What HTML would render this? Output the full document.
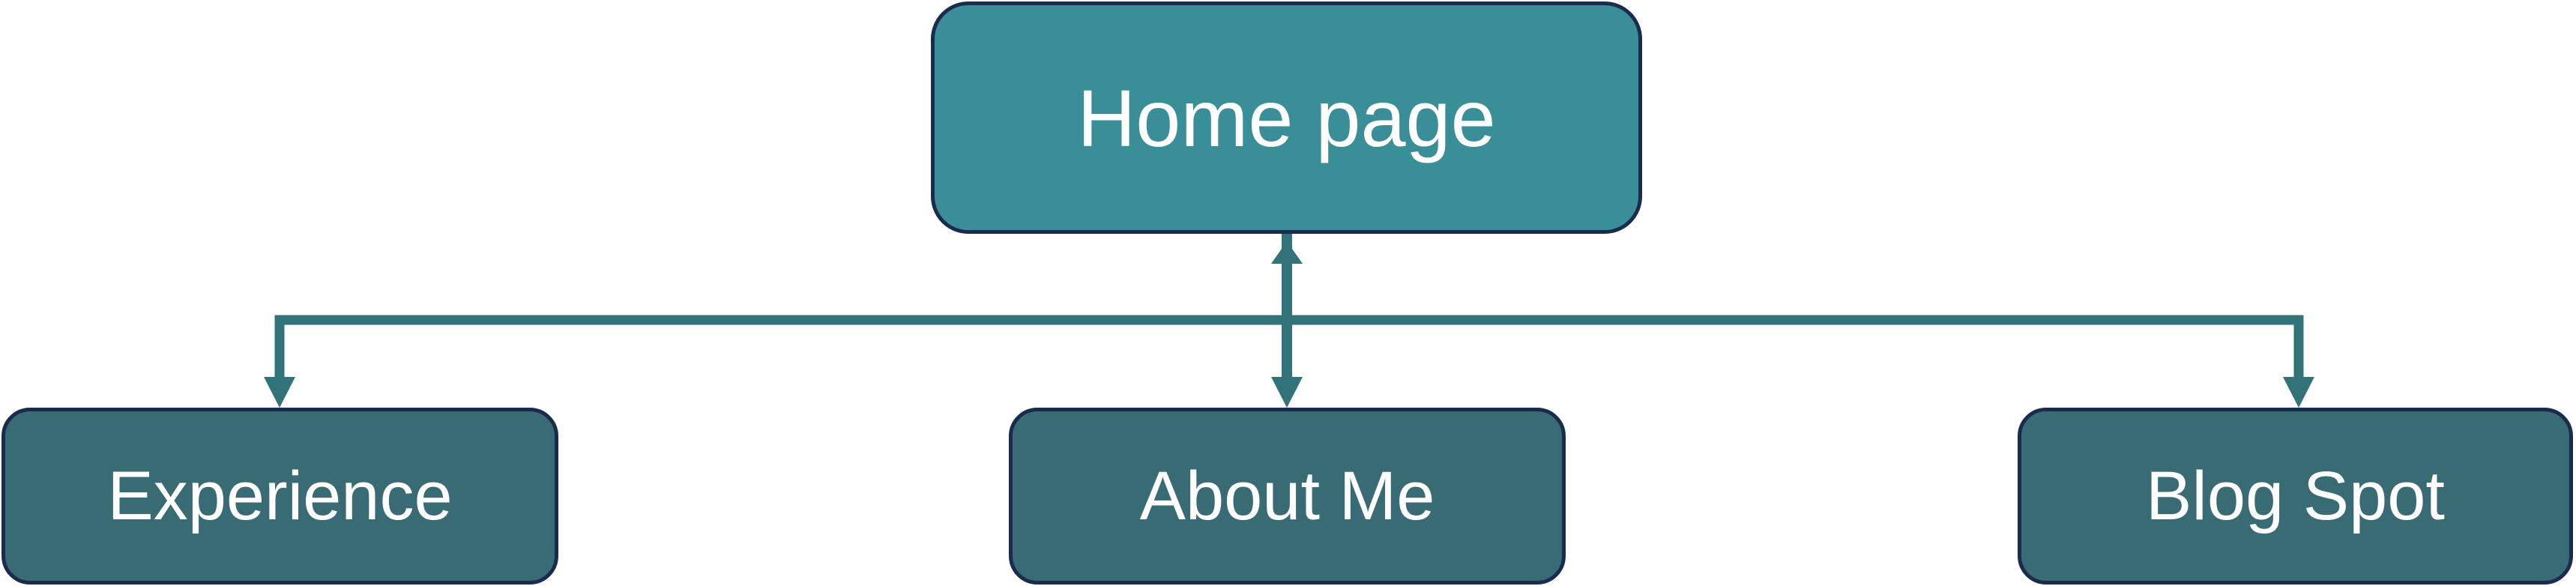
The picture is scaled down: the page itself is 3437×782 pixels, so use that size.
<!DOCTYPE html>
<html><head><style>
html,body{margin:0;padding:0;background:#fff;width:3437px;height:782px;overflow:hidden;position:relative}
.b{position:absolute;box-sizing:border-box;border:5px solid #1B2B4E;display:flex;align-items:center;justify-content:center;color:#fff;font-family:"Liberation Sans",sans-serif}
.h{background:#3A8E98;border-radius:50px;font-size:108px}
.c{background:#386B74;border-radius:38px;font-size:92px}
</style></head><body>
<svg width="3437" height="782" style="position:absolute;left:0;top:0">
<g fill="#32737A">
<polyline points="373,503 373,427 3067,427 3067,503" fill="none" stroke="#32737A" stroke-width="13"/>
<rect x="1710" y="310" width="14" height="195"/>
<polygon points="352,503 394,503 373,544"/>
<polygon points="3046,503 3088,503 3067,544"/>
<polygon points="1696,503 1738,503 1717,544"/>
<polygon points="1696,352 1738,352 1717,322"/>
</g>
</svg>
<div class="b h" style="left:1242px;top:2px;width:949px;height:310px">Home page</div>
<div class="b c" style="left:2px;top:544px;width:743px;height:236px">Experience</div>
<div class="b c" style="left:1346px;top:544px;width:743px;height:236px">About Me</div>
<div class="b c" style="left:2692px;top:544px;width:741px;height:236px">Blog Spot</div>
</body></html>
